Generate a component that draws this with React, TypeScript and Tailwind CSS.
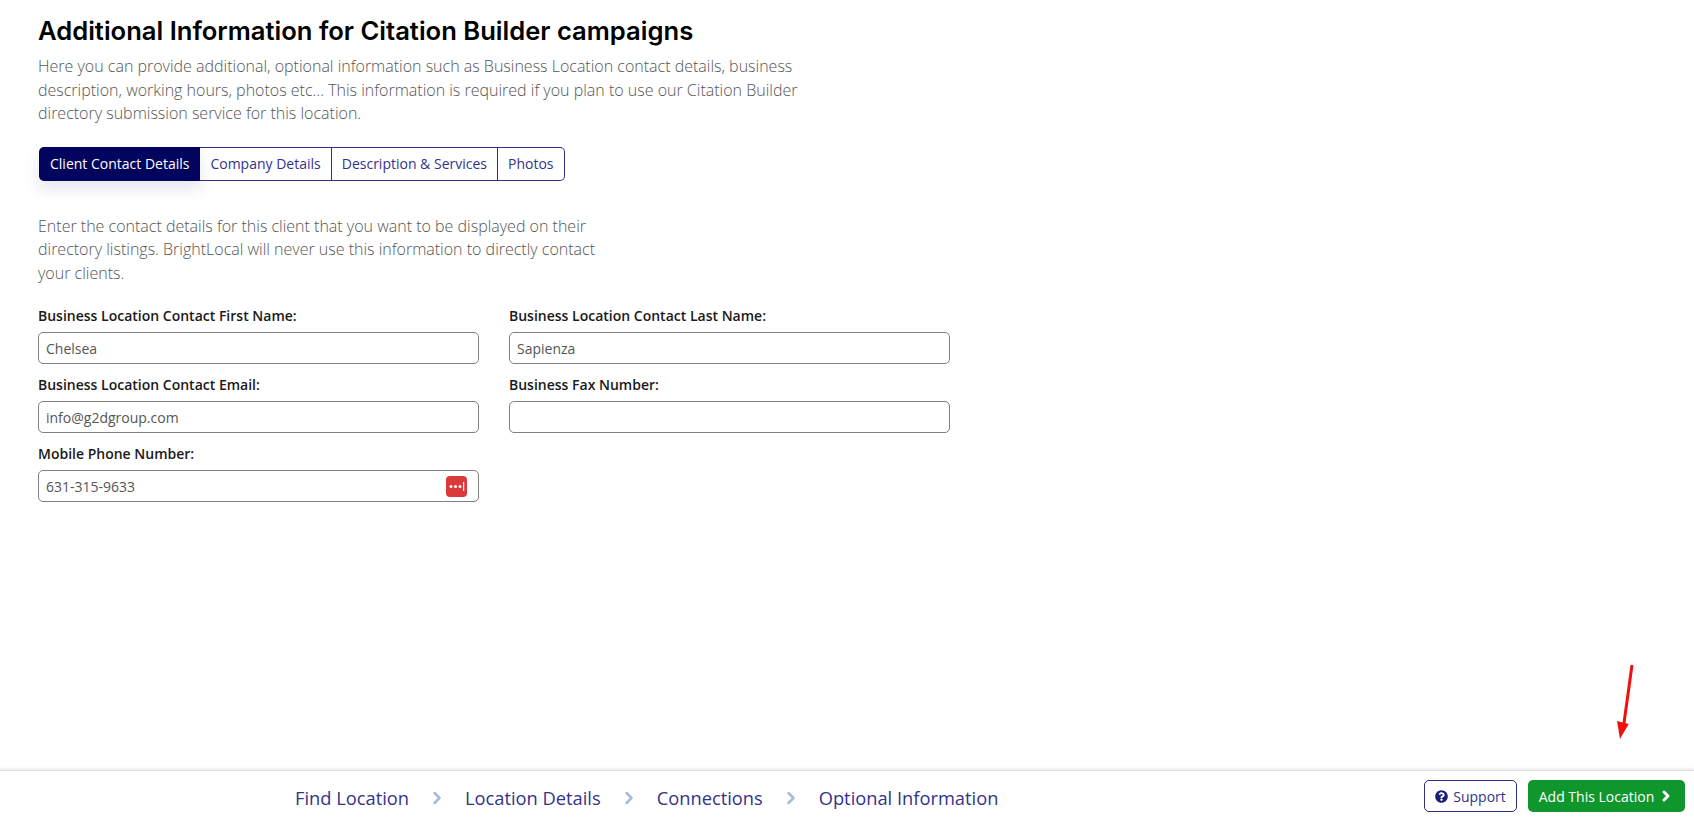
import { ChevronRight } from 'lucide-react'
import { FaQuestionCircle } from 'react-icons/fa'

const tabs = ['Client Contact Details', 'Company Details', 'Description & Services', 'Photos']
const steps = ['Find Location', 'Location Details', 'Connections', 'Optional Information']

function Field({ label, value, icon }: { label: string; value?: string; icon?: boolean }) {
  return (
    <div className="w-[441px]">
      <div className="h-[26px] text-[14px] leading-[19px] font-semibold text-[#1a1a1a]">{label}</div>
      <div className="relative flex h-[32px] items-center rounded-[5px] border border-[#808080] bg-white px-[7px] text-[14px] text-[#555]">
        {value}
        {icon && (
          <svg className="absolute right-[11px] top-[5px]" width="21" height="21" viewBox="0 0 21 21">
            <rect width="21" height="21" rx="4" fill="#dc3a3a" />
            <circle cx="5" cy="10.5" r="1.5" fill="#fff" />
            <circle cx="9.5" cy="10.5" r="1.5" fill="#fff" />
            <circle cx="14" cy="10.5" r="1.5" fill="#fff" />
            <rect x="17" y="6" width="1.2" height="9" fill="#fff" />
          </svg>
        )}
      </div>
    </div>
  )
}

export default function App() {
  return (
    <div className="relative flex h-[821px] flex-col overflow-hidden bg-white font-['Open_Sans',sans-serif]">
      <main className="flex-1 pl-[38px] pt-[15px]">
        <h1 className="text-[25.6px] leading-[32px] font-semibold text-black font-['Inter',sans-serif]">
          Additional Information for Citation Builder campaigns
        </h1>

        <p className="mt-[8px] w-[780px] text-[16px] leading-[23.5px] font-light text-[#555]">
          Here you can provide additional, optional information such as Business Location contact details, business
          description, working hours, photos etc... This information is required if you plan to use our Citation Builder
          directory submission service for this location.
        </p>

        <div className="ml-[1px] mt-[21.5px] flex h-[34px] w-fit rounded-[5px] text-[14px]">
          {tabs.map((tab, index) => (
            <div
              key={tab}
              className={
                index === 0
                  ? 'flex items-center rounded-l-[5px] bg-[#03045e] px-[11px] pb-[2px] text-white shadow-[0_8px_16px_rgba(3,4,94,0.1)]'
                  : index === tabs.length - 1
                    ? 'flex items-center rounded-r-[5px] border border-l-0 border-[#2e2e82] px-[10px] pb-[2px] text-[#33338a]'
                    : 'flex items-center border border-l-0 border-[#2e2e82] px-[10px] pb-[2px] text-[#33338a]'
              }
            >
              {tab}
            </div>
          ))}
        </div>

        <p className="mt-[33.5px] w-[560px] text-[16px] leading-[23.5px] font-light text-[#555]">
          Enter the contact details for this client that you want to be displayed on their directory listings.
          BrightLocal will never use this information to directly contact your clients.
        </p>

        <div className="mt-[21px] grid w-[912px] grid-cols-2 gap-x-[30px] gap-y-[11px]">
          <Field label="Business Location Contact First Name:" value="Chelsea" />
          <Field label="Business Location Contact Last Name:" value="Sapienza" />
          <Field label="Business Location Contact Email:" value="info@g2dgroup.com" />
          <Field label="Business Fax Number:" />
          <Field label="Mobile Phone Number:" value="631-315-9633" icon />
        </div>
      </main>

      {/* annotation arrow */}
      <svg className="absolute left-[1610px] top-[660px]" width="35" height="85" viewBox="0 0 35 85">
        <line x1="22" y1="5" x2="14" y2="63" stroke="#f01010" strokeWidth="3" />
        <polygon points="7,61 18.7,64 10,79" fill="#f01010" />
      </svg>

      <footer className="flex h-[51px] items-center border-t border-[#dedede] pl-[295px] pr-[9px] shadow-[0_-1px_3px_rgba(0,0,0,0.1)]">
        <div className="flex flex-1 items-center pt-[4px] text-[18.3px] font-medium text-[#33338a]">
          {steps.map((step, index) => (
            <div key={step} className="flex items-center">
              {index > 0 && <ChevronRight className="mx-[18px] text-[#a9bbdc]" size={20} strokeWidth={3} />}
              {step}
            </div>
          ))}
        </div>
        <button className="flex h-[32px] w-[93px] items-center justify-center gap-[5px] rounded-[5px] border border-[#2e2e82] text-[14px] text-[#33338a]">
          <FaQuestionCircle size={13} className="text-[#1d1d78]" />
          Support
        </button>
        <button className="ml-[11px] flex h-[32px] w-[157px] items-center justify-center gap-[4px] rounded-[5px] bg-[#0f962d] text-[14px] font-medium text-white">
          Add This Location
          <ChevronRight size={16} strokeWidth={4.5} />
        </button>
      </footer>
    </div>
  )
}
